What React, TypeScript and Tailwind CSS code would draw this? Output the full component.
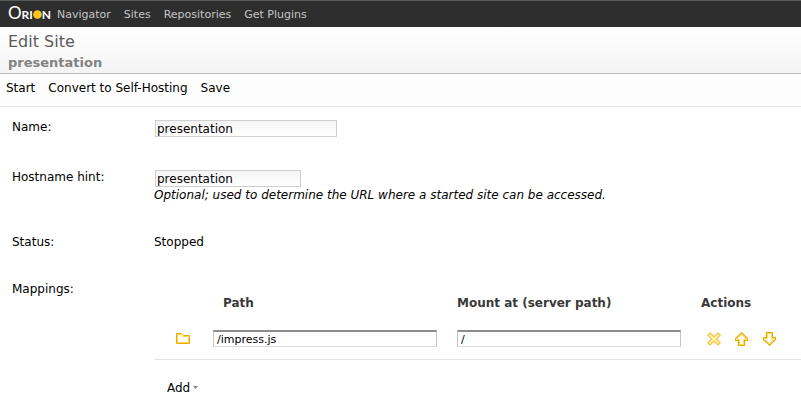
import type { ReactNode } from "react";

const NAV_ITEMS = ["Navigator", "Sites", "Repositories", "Get Plugins"];
const COMMANDS = ["Start", "Convert to Self-Hosting", "Save"];

const fieldClass =
  "block h-[17px] border border-[#cfcfcf] bg-linear-to-b from-[#f4f4f4] to-white px-px text-xs leading-[15px] text-black outline-none";
const pathClass =
  "block h-[17px] w-[224px] border border-t-2 border-[#c4c4c4] border-t-[#8c8c8c] border-b-[#dcdcdc] bg-white px-[3px] text-[11px] leading-[14px] text-black outline-none";

function Logo() {
  return (
    <a
      href="#home"
      aria-label="Orion"
      className="flex w-[43px] items-baseline pb-[3px] font-['Lato',sans-serif] leading-none text-white"
    >
      <span className="text-[17px]">O</span>
      <span className="text-xs leading-none font-bold">RI</span>
      <svg width="9" height="9" viewBox="0 0 9 9" aria-hidden="true">
        <circle cx="4.5" cy="4.5" r="4.4" fill="#fdc51f" />
      </svg>
      <span className="text-xs leading-none font-bold">N</span>
    </a>
  );
}

function FolderIcon() {
  return (
    <svg width="14" height="11" viewBox="0 0 14 11" aria-hidden="true">
      <path d="M.5 10.5V.5h5l2 2h6v8z" fill="#fff" stroke="#eaa800" />
      <path d="M1.5 9.5v-8h3.6l2 2h5.4v6z" fill="none" stroke="#ffd84a" />
    </svg>
  );
}

function DeleteIcon() {
  return (
    <svg width="14" height="14" viewBox="0 0 14 14" aria-hidden="true">
      <path
        d="M3 .8 7 4.6 11 .8 13.4 3.2 9.6 7l3.8 3.8-2.4 2.4-4-3.8-4 3.8L.6 10.8 4.4 7 .6 3.2z"
        fill="#ffe88a"
        stroke="#efb10e"
      />
      <path d="m3 3.2 8 7.6M11 3.2l-8 7.6" fill="none" stroke="#fff8d8" />
    </svg>
  );
}

function ArrowIcon({ down = false }: { down?: boolean }) {
  return (
    <svg
      width="14"
      height="14"
      viewBox="0 0 14 14"
      aria-hidden="true"
      className={down ? "-scale-y-100" : undefined}
    >
      <path
        d="M6.5.8 12.4 6.6v1.9h-2.9v5h-6v-5H.6V6.6z"
        fill="#fff"
        stroke="#eaa800"
        strokeWidth="1.2"
      />
      <path
        d="M6.5 2.3 11 6.9v.6H8.5v5h-4v-5H2v-.6z"
        fill="none"
        stroke="#ffdb55"
      />
    </svg>
  );
}

function Row({
  label,
  htmlFor,
  children,
}: {
  label: string;
  htmlFor?: string;
  children: ReactNode;
}) {
  return (
    <div className="grid grid-cols-[142px_1fr]">
      {htmlFor ? (
        <label htmlFor={htmlFor} className="self-start">
          {label}
        </label>
      ) : (
        <span>{label}</span>
      )}
      <div>{children}</div>
    </div>
  );
}

function Mappings() {
  return (
    <>
      <table className="mt-1.5 w-full table-fixed text-left">
        <colgroup>
          <col className="w-[59px]" />
          <col className="w-[244px]" />
          <col className="w-[244px]" />
          <col />
        </colgroup>
        <thead>
          <tr className="h-8 text-[#3a3a3a]">
            <td />
            <th className="pl-2.5">Path</th>
            <th>Mount at (server path)</th>
            <th>Actions</th>
          </tr>
        </thead>
        <tbody>
          <tr className="h-10 border-b border-[#e2e2e2]">
            <td className="pl-[22px]">
              <FolderIcon />
            </td>
            <td>
              <input aria-label="Path" defaultValue="/impress.js" className={pathClass} />
            </td>
            <td>
              <input aria-label="Mount at" defaultValue="/" className={pathClass} />
            </td>
            <td>
              <div className="flex gap-3.5 pl-1.5">
                <button type="button" aria-label="Delete">
                  <DeleteIcon />
                </button>
                <button type="button" aria-label="Move up">
                  <ArrowIcon />
                </button>
                <button type="button" aria-label="Move down">
                  <ArrowIcon down />
                </button>
              </div>
            </td>
          </tr>
        </tbody>
      </table>
      <button type="button" className="mt-5 ml-[13px] flex items-center gap-[3px]">
        Add
        <svg width="5" height="3" viewBox="0 0 5 3" aria-hidden="true">
          <path d="M0 0h5L2.5 3z" fill="#888" />
        </svg>
      </button>
    </>
  );
}

export default function App() {
  return (
    <div className="min-h-screen bg-white font-['DejaVu_Sans',Verdana,sans-serif] text-xs leading-4 text-black">
      <header className="flex h-[27px] items-center border-t border-[#5a5c5c] bg-[#2e2e2e] pl-2">
        <Logo />
        <nav className="flex gap-[13px] pt-0.5 pl-1.5 text-[11px] text-[#c6c6c6]">
          {NAV_ITEMS.map((item) => (
            <a key={item} href="#nav">
              {item}
            </a>
          ))}
        </nav>
      </header>

      <div className="border-b border-[#bcbcbc] bg-linear-to-b from-white to-[#f4f4f4] px-2 pt-[5px]">
        <h1 className="text-base leading-5 text-[#5a5a5a]">Edit Site</h1>
        <h2 className="pt-px text-[13px] leading-5 font-bold text-[#838383]">presentation</h2>
      </div>

      <div className="flex gap-[13px] border-b border-[#e6e6e6] bg-[#fdfdfd] px-1.5 pt-1.5 pb-2.5">
        {COMMANDS.map((command) => (
          <button key={command} type="button">
            {command}
          </button>
        ))}
      </div>

      <form className="flex flex-col gap-[31px] pt-3 pl-3">
        <Row label="Name:" htmlFor="site-name">
          <div className="px-px py-px">
            <input
              id="site-name"
              defaultValue="presentation"
              className={`${fieldClass} w-[182px]`}
            />
          </div>
        </Row>
        <Row label="Hostname hint:" htmlFor="site-host">
          <div className="px-px py-px">
            <input
              id="site-host"
              defaultValue="presentation"
              className={`${fieldClass} w-[146px]`}
            />
          </div>
          <p className="leading-[15px] italic">
            Optional; used to determine the URL where a started site can be accessed.
          </p>
        </Row>
        <Row label="Status:">Stopped</Row>
        <Row label="Mappings:">
          <Mappings />
        </Row>
      </form>
    </div>
  );
}
